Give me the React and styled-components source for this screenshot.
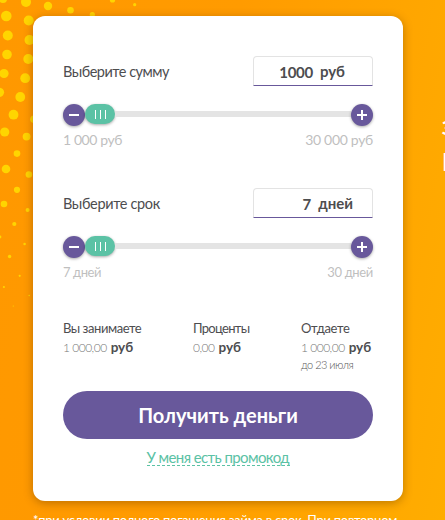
import React from 'react';
import styled, { createGlobalStyle } from 'styled-components';

const GlobalStyle = createGlobalStyle`
  * {
    box-sizing: border-box;
  }

  body {
    margin: 0;
    overflow: hidden;
    font-family: Lato, "Noto Sans", sans-serif;
    color: #4d4d4f;
  }
`;

const Page = styled.main`
  position: relative;
  height: 520px;
  padding: 16px 42px 0 33px;
  overflow: hidden;
  background: linear-gradient(100deg, #ff9800 0%, #ff9b00 45%, #ffad00 100%);
`;

const Dots = styled.svg`
  position: absolute;
  top: 0;
  left: 0;
  fill: #ffd500;
`;

const Card = styled.section`
  position: relative;
  height: 485px;
  padding: 40px 30px 0;
  border-radius: 12px;
  background: #fff;
  box-shadow: 0 2px 10px rgba(90, 50, 0, 0.4);
`;

const Field = styled.div`
  height: 132px;
`;

const FieldHead = styled.div`
  display: flex;
  justify-content: space-between;
  height: 30px;
`;

const Text = styled.span`
  display: block;
  font-size: ${({ $size }) => $size || 14}px;
  font-weight: ${({ $weight }) => $weight || 400};
  line-height: ${({ $line }) => $line || 20}px;
  letter-spacing: ${({ $spacing }) => $spacing || 0}px;
  color: ${({ $color }) => $color || 'inherit'};
  white-space: nowrap;
`;

const ValueBox = styled.div`
  display: flex;
  justify-content: flex-end;
  gap: 7px;
  width: 120px;
  height: 30px;
  padding-right: ${({ $right }) => $right}px;
  border: 1px solid #e3e3e3;
  border-bottom-color: #68589b;
  border-radius: 4px 4px 0 0;
`;

const Slider = styled.div`
  display: flex;
  align-items: center;
  height: 22px;
  margin-top: 18px;
`;

const RoundButton = styled.button`
  display: flex;
  align-items: center;
  justify-content: center;
  flex: none;
  width: 22px;
  height: 22px;
  padding: 0;
  border: 0;
  border-radius: 50%;
  background: #68589b;
  box-shadow: 0 1px 3px rgba(0, 0, 0, 0.35);
`;

const Handle = styled.div`
  display: flex;
  align-items: center;
  justify-content: center;
  gap: 4px;
  width: 30px;
  height: 20px;
  margin-bottom: 2px;
  border-radius: 10px;
  background: #5bc2a5;
  box-shadow: 0 1px 3px rgba(0, 0, 0, 0.35);
`;

const Grip = styled.i`
  width: 1px;
  height: 9px;
  background: #fff;
`;

const Track = styled.div`
  flex: 1;
  height: 6px;
  margin-bottom: 2px;
  background: #e4e4e4;
`;

const Range = styled.div`
  display: flex;
  justify-content: space-between;
  margin-top: 4px;
`;

const Summary = styled.div`
  display: grid;
  grid-template-columns: 130px 108px 1fr;
  height: 73px;
  margin-top: -2px;
`;

const Amount = styled.div`
  display: flex;
  gap: 4px;
`;

const Submit = styled.button`
  display: flex;
  align-items: center;
  justify-content: center;
  width: 310px;
  height: 48px;
  padding: 0;
  border: 0;
  border-radius: 24px;
  background: #68589b;
  color: #fff;
  font-family: inherit;
`;

const Promo = styled.a`
  display: block;
  width: 143px;
  height: 18px;
  margin: 9px auto 0;
  border-bottom: 1px dashed #5bc2a5;
  color: #5bc2a5;
`;

const Footnote = styled.p`
  position: relative;
  margin: 9px 0 0;
  color: #fff;
`;

const Headline = styled.div`
  position: absolute;
  top: 115px;
  left: 442px;
  color: #fff;
`;

const dots = [
  [3, -1, 4], [26, 2, 5], [48, 6, 4.2], [70.5, 10.3, 3.3], [92.3, 14.7, 2.6],
  [112.5, 0, 2.6], [134.7, 4.7, 1.6], [6.3, 16, 5.3], [28.7, 20.5, 5],
  [7.8, 35.5, 5], [29.5, 40, 5], [7, 54.5, 4.8], [28.3, 59, 5],
  [4, 73.5, 4.6], [25.2, 78.2, 4.9], [-0.5, 92.3, 4.6], [20.3, 97, 4.9],
  [13.5, 114.7, 4.9], [34, 119.2, 3.8], [4.7, 132, 4.6], [26.6, 136.6, 3.9],
  [17, 153.6, 3.3], [6, 169, 4.3], [28.9, 174.5, 3.3], [17, 189.8, 3.1],
  [4, 204, 3.3], [27.6, 210, 2], [14.3, 224, 2.1], [0, 237, 1.4],
  [24.6, 244, 1.3], [9.6, 256.5, 1.7], [19.7, 275.8, 1.1], [3.9, 287, 1.1],
  [29.2, 295.5, 0.8], [13.3, 306, 0.6],
];

function RangeField({ label, value, unit, min, max, right, rangeSize, spacing }) {
  return (
    <Field>
      <FieldHead>
        <Text $size={14.5} $line={31} $spacing={spacing.label}>{label}</Text>
        <ValueBox $right={right}>
          <Text $size={15} $weight={700} $line={30} $spacing={spacing.value}>{value}</Text>
          <Text $size={15} $weight={700} $line={28}>{unit}</Text>
        </ValueBox>
      </FieldHead>
      <Slider>
        <RoundButton aria-label="−">
          <svg width="10" height="10" shapeRendering="crispEdges">
            <path d="M0 4h10v2H0z" fill="#fff" />
          </svg>
        </RoundButton>
        <Handle>
          <Grip />
          <Grip />
          <Grip />
        </Handle>
        <Track />
        <RoundButton aria-label="+">
          <svg width="10" height="10" shapeRendering="crispEdges">
            <path d="M0 4h4V0h2v4h4v2H6v4H4V6H0z" fill="#fff" />
          </svg>
        </RoundButton>
      </Slider>
      <Range>
        <Text $size={rangeSize} $color="#bfbfbf" $spacing={spacing.min}>{min}</Text>
        <Text $size={rangeSize} $color="#bfbfbf" $spacing={spacing.max}>{max}</Text>
      </Range>
    </Field>
  );
}

function SummaryItem({ title, amount, note, spacing }) {
  return (
    <div>
      <Text $size={13} $spacing={spacing}>{title}</Text>
      <Amount>
        <Text $size={12} $weight={300} $color="#777" $spacing={-0.5}>{amount}</Text>
        <Text $size={13.5} $weight={700} $line={19}>руб</Text>
      </Amount>
      {note && <Text $size={11} $line={14} $weight={300} $color="#555" $spacing={-0.5}>{note}</Text>}
    </div>
  );
}

export default function App() {
  return (
    <Page>
      <GlobalStyle />
      <Dots width="445" height="520">
        {dots.map(([x, y, r]) => <circle key={`${x}-${y}`} cx={x} cy={y} r={r} />)}
      </Dots>
      <Card>
        <RangeField
          label="Выберите сумму"
          value="1000"
          unit="руб"
          min="1 000 руб"
          max="30 000 руб"
          right={27}
          rangeSize={14}
          spacing={{ label: -0.5, value: -0.3, min: -0.4, max: -0.3 }}
        />
        <RangeField
          label="Выберите срок"
          value="7"
          unit="дней"
          min="7 дней"
          max="30 дней"
          right={19}
          rangeSize={13}
          spacing={{ label: -0.35, min: -0.4, max: -0.35 }}
        />
        <Summary>
          <SummaryItem title="Вы занимаете" amount="1 000,00" spacing={-0.45} />
          <SummaryItem title="Проценты" amount="0,00" spacing={-0.7} />
          <SummaryItem title="Отдаете" amount="1 000,00" note="до 23 июля" spacing={-0.3} />
        </Summary>
        <Submit>
          <Text $size={20} $weight={700}>Получить деньги</Text>
        </Submit>
        <Promo>
          <Text $size={15} $line={18} $spacing={-0.6}>У меня есть промокод</Text>
        </Promo>
      </Card>
      <Footnote>
        <Text $size={13} $spacing={-0.28}>*при условии полного погашения займа в срок. При повторном</Text>
      </Footnote>
      <Headline>
        <Text $size={18} $weight={700} $line={26}>З</Text>
        <Text $size={24} $weight={700} $line={42}>П</Text>
      </Headline>
    </Page>
  );
}
